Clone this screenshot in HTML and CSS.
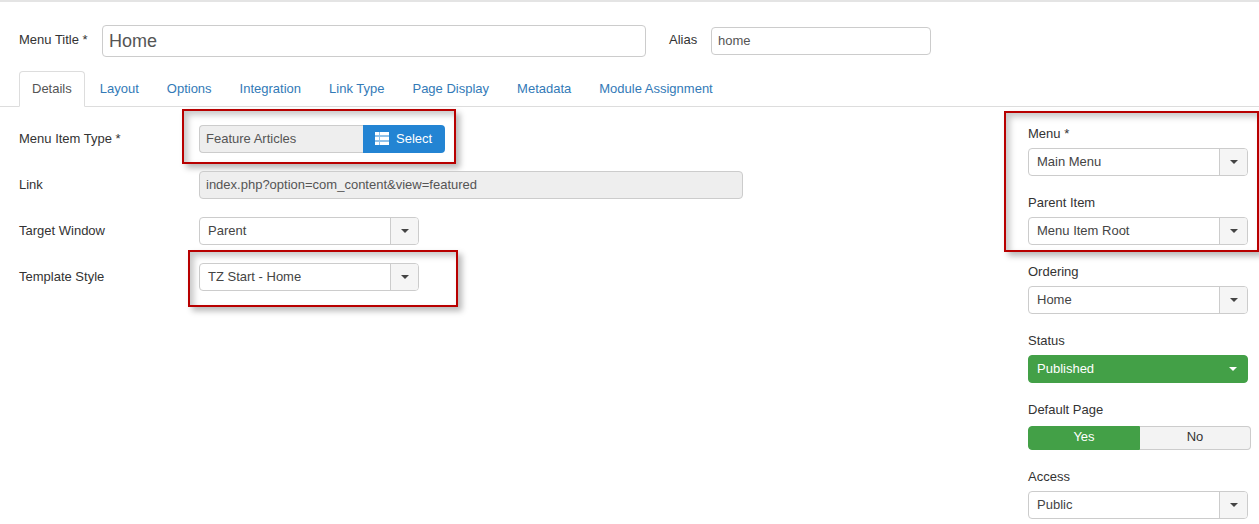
FILE: index.html
```html
<!doctype html>
<html lang="en">
<head>
    <meta charset="UTF-8">
    <title>Edit Menu Item</title>
    <link rel="stylesheet" href="styles.css">
</head>
<body>
<div class="page">
    <div class="title-row">
        <label class="title-label">Menu Title *</label>
        <input class="input title-input" value="Home">
        <label class="alias-label">Alias</label>
        <input class="input alias-input" value="home">
    </div>

    <ul class="tabs">
        <li class="tab active"><a>Details</a></li>
        <li class="tab"><a>Layout</a></li>
        <li class="tab"><a>Options</a></li>
        <li class="tab"><a>Integration</a></li>
        <li class="tab"><a>Link Type</a></li>
        <li class="tab"><a>Page Display</a></li>
        <li class="tab"><a>Metadata</a></li>
        <li class="tab"><a>Module Assignment</a></li>
    </ul>

    <div class="content">
        <div class="main">
            <div class="row">
                <div class="row-label">Menu Item Type *</div>
                <div class="control">
                    <div class="type-picker">
                        <div class="type-name">Feature Articles</div>
                        <div class="btn-select">
                            <svg class="icon-list" viewBox="0 0 14 13" width="14" height="13">
                                <path fill="#fff" d="M0 0h14v3.6H0zM0 4.6h14V8.4H0zM0 9.4h14V13H0z"/>
                                <path fill="#8fc1ea" d="M4 0h1v13H4z"/>
                            </svg>
                            Select
                        </div>
                    </div>
                    <div class="mark mark-type"></div>
                </div>
            </div>
            <div class="row">
                <div class="row-label">Link</div>
                <div class="control">
                    <input class="input link-input" value="index.php?option=com_content&amp;view=featured" readonly>
                </div>
            </div>
            <div class="row">
                <div class="row-label">Target Window</div>
                <div class="control">
                    <div class="select">
                        <span class="select-value">Parent</span>
                        <span class="select-arrow"><i class="caret"></i></span>
                    </div>
                </div>
            </div>
            <div class="row">
                <div class="row-label">Template Style</div>
                <div class="control">
                    <div class="select">
                        <span class="select-value">TZ Start - Home</span>
                        <span class="select-arrow"><i class="caret"></i></span>
                    </div>
                    <div class="mark mark-style"></div>
                </div>
            </div>
        </div>

        <div class="sidebar">
            <div class="side-marked">
                <div class="side-group">
                    <div class="side-label">Menu *</div>
                    <div class="select">
                        <span class="select-value">Main Menu</span>
                        <span class="select-arrow"><i class="caret"></i></span>
                    </div>
                </div>
                <div class="side-group">
                    <div class="side-label">Parent Item</div>
                    <div class="select">
                        <span class="select-value">Menu Item Root</span>
                        <span class="select-arrow"><i class="caret"></i></span>
                    </div>
                </div>
                <div class="mark mark-side"></div>
            </div>
            <div class="side-group">
                <div class="side-label">Ordering</div>
                <div class="select">
                    <span class="select-value">Home</span>
                    <span class="select-arrow"><i class="caret"></i></span>
                </div>
            </div>
            <div class="side-group">
                <div class="side-label">Status</div>
                <div class="select select-green">
                    <span class="select-value">Published</span>
                    <span class="select-arrow"><i class="caret"></i></span>
                </div>
            </div>
            <div class="side-group">
                <div class="side-label">Default Page</div>
                <div class="toggle">
                    <div class="toggle-yes">Yes</div>
                    <div class="toggle-no">No</div>
                </div>
            </div>
            <div class="side-group">
                <div class="side-label">Access</div>
                <div class="select">
                    <span class="select-value">Public</span>
                    <span class="select-arrow"><i class="caret"></i></span>
                </div>
            </div>
        </div>
    </div>
</div>
</body>
</html>
```

FILE: styles.css
```css
* {
    box-sizing: border-box;
}
html, body {
    overflow: hidden;
}
body {
    margin: 0;
    padding: 0;
    background: #fff;
    font-family: "Liberation Sans", Arial, sans-serif;
    font-size: 13px;
    color: #333;
}
.page {
    height: 524px;
    border-top: 2px solid #e4e4e4;
    overflow: hidden;
}
.input {
    display: block;
    height: 28px;
    padding: 0 6px 2px;
    border: 1px solid #ccc;
    border-radius: 4px;
    background: #fff;
    font-family: inherit;
    font-size: 13px;
    color: #555;
    outline: none;
}

/* title row */
.title-row {
    display: flex;
    align-items: center;
    height: 32px;
    margin-top: 23px;
    padding-left: 19px;
}
.title-label {
    width: 83px;
    margin-top: -4px;
}
.title-input {
    width: 544px;
    height: 32px;
    padding-bottom: 0;
    font-size: 18px;
}
.alias-label {
    width: 42px;
    margin-left: 23px;
    margin-top: -4px;
}
.alias-input {
    width: 220px;
}

/* tabs */
.tabs {
    display: flex;
    height: 36px;
    margin: 14px 0 0;
    padding: 0 0 0 19px;
    list-style: none;
    border-bottom: 1px solid #ddd;
}
.tab {
    height: 36px;
    padding: 0 14px;
    line-height: 35px;
    color: #337ab7;
}
.tab.active {
    margin-right: 1px;
    padding: 0 12px;
    border: 1px solid #ddd;
    border-bottom-color: #fff;
    border-radius: 4px 4px 0 0;
    line-height: 34px;
    background: #fff;
    color: #555;
}

/* layout */
.content {
    display: flex;
    justify-content: space-between;
}
.main {
    display: flex;
    flex-direction: column;
    gap: 18px;
    padding: 18px 0 0 19px;
}
.row {
    display: flex;
    align-items: center;
    height: 28px;
}
.row-label {
    width: 180px;
    padding-bottom: 2px;
}
.control {
    position: relative;
}
.sidebar {
    display: flex;
    flex-direction: column;
    gap: 17px;
    width: 231px;
    padding: 17px 8px 0 0;
}
.side-marked {
    position: relative;
    display: flex;
    flex-direction: column;
    gap: 17px;
}
.side-label {
    height: 18px;
    margin-bottom: 6px;
    line-height: 20px;
}

/* select */
.select {
    display: flex;
    width: 220px;
    height: 28px;
    border: 1px solid #ccc;
    border-radius: 4px;
    background: #fff;
    color: #444;
    overflow: hidden;
}
.select-value {
    flex: 1;
    padding-left: 8px;
    line-height: 26px;
}
.select-arrow {
    display: flex;
    align-items: center;
    justify-content: center;
    width: 28px;
    border-left: 1px solid #ccc;
    background: #f5f5f5;
}
.caret {
    width: 0;
    height: 0;
    border-top: 4px solid #444;
    border-left: 4px solid transparent;
    border-right: 4px solid transparent;
}
.select-green {
    border-color: #43a047;
    background: #43a047;
    color: #fff;
}
.select-green .select-arrow {
    border-left: 0;
    background: #43a047;
}
.select-green .caret {
    border-top-color: #fff;
}

/* picker */
.type-picker {
    display: flex;
    width: 246px;
    height: 28px;
}
.type-name {
    width: 164px;
    padding-left: 6px;
    border: 1px solid #ccc;
    border-right: 0;
    border-radius: 4px 0 0 4px;
    background: #eee;
    line-height: 26px;
    color: #555;
}
.btn-select {
    display: flex;
    align-items: center;
    gap: 7px;
    width: 82px;
    padding: 0 0 2px 12px;
    border-radius: 0 4px 4px 0;
    background: #2384d3;
    color: #fff;
}
.link-input {
    width: 544px;
    background: #eee;
}

/* toggle */
.toggle {
    display: flex;
    width: 223px;
    height: 24px;
    margin-top: 8px;
    line-height: 20px;
    text-align: center;
}
.toggle-yes {
    width: 112px;
    border: 1px solid #43a047;
    border-radius: 4px 0 0 4px;
    background: #43a047;
    color: #fff;
}
.toggle-no {
    flex: 1;
    border: 1px solid #ccc;
    border-left: 0;
    border-radius: 0 4px 4px 0;
    background: #f3f3f3;
    color: #333;
}

/* red annotation boxes */
.mark {
    position: absolute;
    border: 2px solid #b80000;
    box-shadow: 4px 4px 6px rgba(0, 0, 0, .28), inset 4px 4px 6px rgba(0, 0, 0, .22);
    pointer-events: none;
}
.mark-type {
    inset: -16px -11px -11px -17px;
}
.mark-style {
    inset: -13px -39px -16px -11px;
}
.mark-side {
    inset: -13px -8px -7px -24px;
}
```
